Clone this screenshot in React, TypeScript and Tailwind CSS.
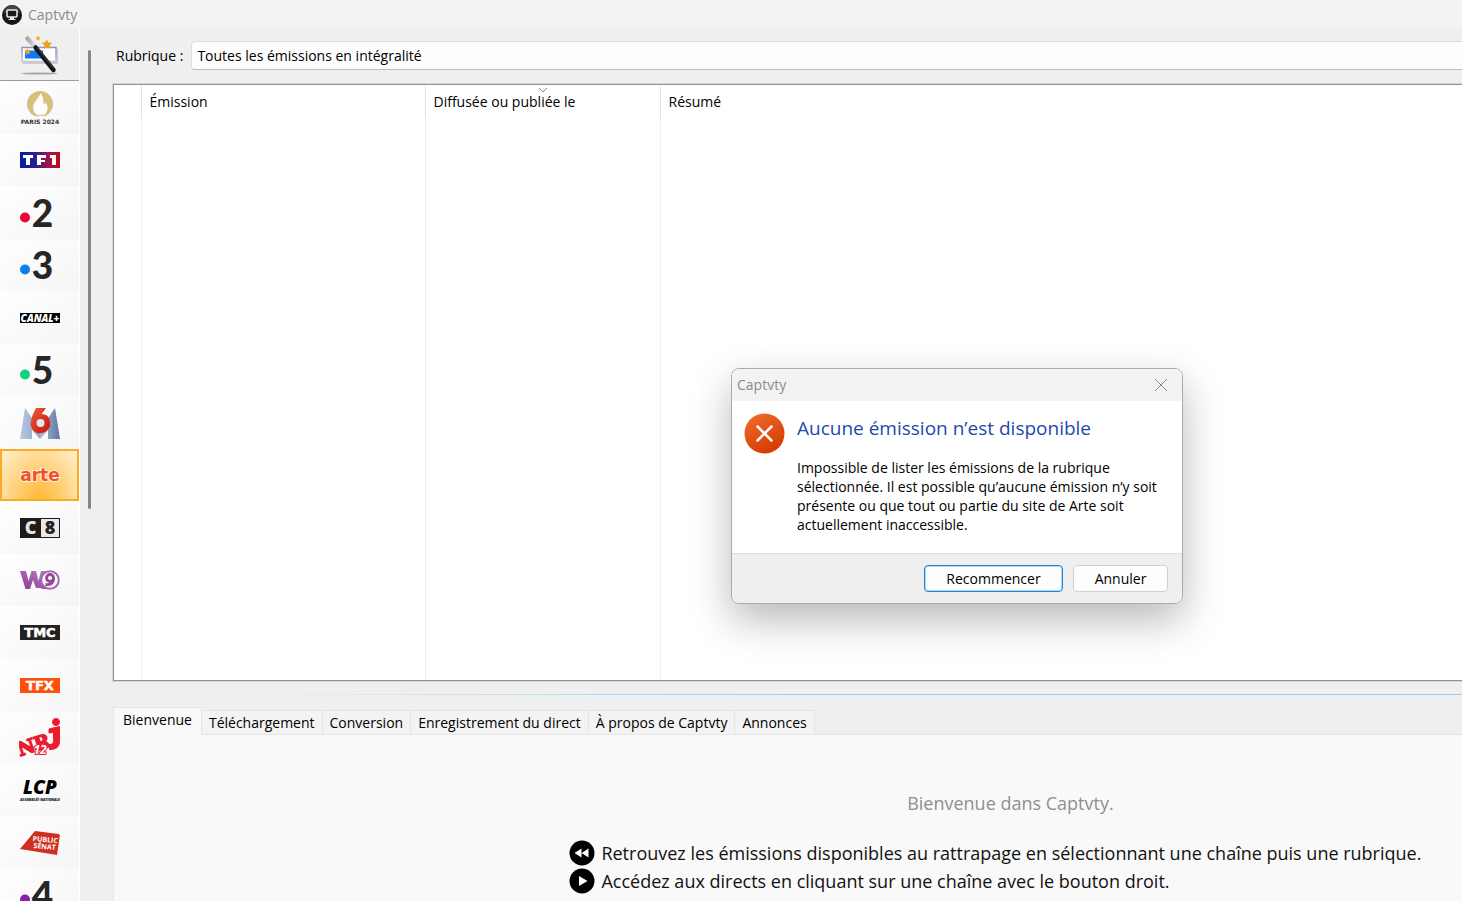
import React, { useState } from 'react';

const digitFont = 'Lato, sans-serif';
const blockFont = '"Open Sans", sans-serif';
const wideFont = '"DejaVu Sans", sans-serif';
const slabFont = '"DejaVu Serif", serif';

function WizardIcon() {
  return (
    <svg width="40" height="40" viewBox="0 0 40 40" aria-hidden="true">
      <defs>
        <linearGradient id="frame" x1="0" y1="0" x2="0" y2="1">
          <stop offset="0" stopColor="#8f93b8" />
          <stop offset="1" stopColor="#c2c4d2" />
        </linearGradient>
        <linearGradient id="tip" x1="0" y1="0" x2="1" y2="0">
          <stop offset="0" stopColor="#a8a8a8" />
          <stop offset="1" stopColor="#e6e6e6" />
        </linearGradient>
      </defs>
      <ellipse cx="19.500" cy="38.500" rx="18" ry="1" fill="#a4a4a4" />
      <rect x="3" y="14" width="35" height="15" fill="#cdcdd0" />
      <rect x="2" y="12.500" width="34" height="14" fill="#fff" stroke="url(#frame)" strokeWidth="1.500" />
      <rect x="5" y="15.500" width="18" height="8" fill="#0a7cf5" />
      <path d="M7 13.500l1.200 1.500 2.300-.2-1 2 .8 2.200-2.300-.4L6 20l-.2-2.300L4.500 16l2-.6z" fill="#eda02c" />
      <path d="M26.500 4.500l2 3 3.500.2-2.200 2.500.5 3.300-3.200-1.200-3 1.500.2-3.500-2.500-2.500 3.500-.6z" fill="#f0a01e" />
      <path d="M18 1l.8 1.300 1.700.2-1.200 1.300.3 1.700-1.600-.7-1.600.7.3-1.700-1.200-1.300 1.700-.2z" fill="#f5a51e" />
      <path d="M7.500 3.500l8 8.500" stroke="url(#tip)" strokeWidth="4.500" strokeLinecap="round" />
      <path d="M15.500 12.500L33.500 35" stroke="#161616" strokeWidth="4.500" strokeLinecap="round" />
      <path d="M17.500 13l16 20" stroke="#4a4a4a" strokeWidth="1" />
    </svg>
  );
}

function ParisLogo() {
  return (
    <svg width="42" height="44" viewBox="0 0 42 44" aria-hidden="true">
      <circle cx="21" cy="18" r="13" fill="#d5c07c" />
      <path
        d="M21.500 7c-1 5-7 8.500-7.500 14 0 3 1.500 6 4 8.500L20 32h3l1.500-2.500c3-2 4.500-5 4-8.500-.2-2-1-3.500-2-4.500-.8 1-1.400 1.600-2.200 1.700C25 13.500 23.500 10 21.500 7z"
        fill="#fdfdfd"
      />
      <path d="M17.500 28.500c1.500 1.500 5.500 1.500 7 0" stroke="#d5c07c" strokeWidth="1" fill="none" />
      <text x="21" y="38" textAnchor="middle" fontFamily={wideFont} fontWeight="700" fontSize="6" fill="#333">
        PARIS 2024
      </text>
    </svg>
  );
}

function Tf1Logo() {
  return (
    <svg width="40" height="16" viewBox="0 0 40 16" aria-hidden="true">
      <defs>
        <linearGradient id="tf1">
          <stop offset="0" stopColor="#0a1aa4" />
          <stop offset="0.35" stopColor="#20209a" />
          <stop offset="0.7" stopColor="#a0104a" />
          <stop offset="1" stopColor="#c00d14" />
        </linearGradient>
      </defs>
      <rect width="40" height="16" fill="url(#tf1)" />
      <g fill="#fff">
        <path d="M3 3h10v3H10v7H6V6H3z" />
        <path d="M17 3h9v3h-5v2h4v2h-4v3h-4z" />
        <path d="M30 3h6v10h-4V6h-2z" />
      </g>
    </svg>
  );
}

function DigitLogo({ digit, color }: { digit: string; color: string }) {
  return (
    <svg width="40" height="50" viewBox="0 0 40 50" aria-hidden="true">
      <circle cx="5" cy="29.500" r="5" fill={color} />
      <text x="22.500" y="39" textAnchor="middle" fontFamily={digitFont} fontWeight="900" fontSize="37" fill="#262626">
        {digit}
      </text>
    </svg>
  );
}

function CanalLogo() {
  return (
    <svg width="40" height="18" viewBox="0 0 40 18" aria-hidden="true">
      <rect y="4" width="40" height="10" fill="#000" />
      <text x="20" y="13" textAnchor="middle" fontFamily={blockFont} fontWeight="800" fontStyle="italic" fontSize="10" fill="#fff">
        CANAL+
      </text>
    </svg>
  );
}

function M6Logo() {
  return (
    <svg width="40" height="40" viewBox="0 0 40 40" aria-hidden="true">
      <defs>
        <linearGradient id="m6a">
          <stop offset="0" stopColor="#b9c8e2" />
          <stop offset="1" stopColor="#90a5c8" />
        </linearGradient>
        <linearGradient id="m6b">
          <stop offset="0" stopColor="#a9bad6" />
          <stop offset="1" stopColor="#62779d" />
        </linearGradient>
        <linearGradient id="m6c" x1="0" y1="0" x2="1" y2="1">
          <stop offset="0" stopColor="#ef5a3a" />
          <stop offset="1" stopColor="#c3140c" />
        </linearGradient>
      </defs>
      <path d="M5 5l15 22v9L12 27v9H0z" fill="url(#m6a)" />
      <path d="M35 5L20 27v9l8-9v9h12z" fill="url(#m6b)" />
      <path d="M16 5h10l-4.500 6c5.500 0 8.500 3.500 8.500 8.500A9.700 9.700 0 1 1 11 18c.5-5 3-9 5-13z" fill="url(#m6c)" />
      <circle cx="20.500" cy="20" r="4" fill="#dfe6f2" />
    </svg>
  );
}

function ArteLogo() {
  return (
    <svg width="42" height="24" viewBox="0 0 42 24" aria-hidden="true">
      <text
        x="21"
        y="18"
        textAnchor="middle"
        fontFamily={wideFont}
        fontWeight="700"
        fontSize="17"
        fill="#f1502d"
        stroke="#fff"
        strokeOpacity="0.7"
        strokeWidth="2"
        paintOrder="stroke"
      >
        arte
      </text>
    </svg>
  );
}

function C8Logo() {
  return (
    <svg width="40" height="26" viewBox="0 0 40 26" aria-hidden="true">
      <rect y="3" width="40" height="20" fill="#1c1c1c" />
      <rect x="21" y="4" width="18" height="18" fill="#e9e9e9" />
      <text x="10.500" y="19" textAnchor="middle" fontFamily={blockFont} fontWeight="800" fontSize="18" fill="#e6e6e6">
        C
      </text>
      <text x="30" y="19" textAnchor="middle" fontFamily={blockFont} fontWeight="800" fontSize="18" fill="#222">
        8
      </text>
    </svg>
  );
}

function W9Logo() {
  return (
    <svg width="40" height="20" viewBox="0 0 40 20" aria-hidden="true">
      <defs>
        <linearGradient id="w9" x1="0" y1="1" x2="1" y2="0">
          <stop offset="0" stopColor="#8b3d90" />
          <stop offset="1" stopColor="#b583c4" />
        </linearGradient>
      </defs>
      <path d="M0 1h6l2.500 10 3-10h4.500l2.500 10 2.500-10h9v18h-8l-1-1h-5l-3-8-3 9H5.500z" fill="url(#w9)" />
      <circle cx="30" cy="10" r="8.800" fill="#fbfbfb" stroke="#a468b0" strokeWidth="2" />
      <circle cx="30" cy="8" r="3.500" fill="none" stroke="#96489a" strokeWidth="2.800" />
      <path d="M33.500 8c.5 5-3 7-8 6.500" fill="none" stroke="#96489a" strokeWidth="2.800" />
    </svg>
  );
}

function BlockLogo({ name, color }: { name: string; color: string }) {
  return (
    <svg width="40" height="23" viewBox="0 0 40 23" aria-hidden="true">
      <rect y="4" width="40" height="15" fill={color} />
      <text x="20" y="16" textAnchor="middle" fontFamily={wideFont} fontWeight="700" fontSize="13" fill="#fff" stroke="#fff" strokeWidth="0.500">
        {name}
      </text>
    </svg>
  );
}

function NrjLogo() {
  return (
    <svg width="42" height="44" viewBox="0 0 42 44" aria-hidden="true">
      <g fill="#ec1c2e" stroke="#ec1c2e">
        <circle cx="37" cy="6" r="3.500" />
        <path d="M30 13l10.500-2.500v15c0 6-4 8-10 8v-5c3 0 4-1 4-4v-8L30 17z" />
        <g transform="rotate(-18 2 40)" fontFamily={slabFont} fontWeight="700" strokeWidth="1.500">
          <text x="1" y="40" fontSize="19">NR</text>
        </g>
      </g>
      <text
        x="21"
        y="38"
        textAnchor="middle"
        fontFamily={blockFont}
        fontWeight="700"
        fontStyle="italic"
        fontSize="12"
        fill="#fff"
        stroke="#ec1c2e"
        strokeWidth="2"
        paintOrder="stroke"
      >
        12
      </text>
    </svg>
  );
}

function LcpLogo() {
  return (
    <svg width="44" height="32" viewBox="0 0 44 32" aria-hidden="true">
      <text x="22" y="20" textAnchor="middle" fontFamily={blockFont} fontWeight="800" fontStyle="italic" fontSize="19" fill="#000">
        LCP
      </text>
      <text x="22" y="27" textAnchor="middle" fontFamily={blockFont} fontWeight="800" fontStyle="italic" fontSize="3.500" fill="#111">
        ASSEMBLÉE NATIONALE
      </text>
    </svg>
  );
}

function PublicSenatLogo() {
  return (
    <svg width="40" height="24" viewBox="0 0 40 24" aria-hidden="true">
      <path d="M15 0l23.500 3q1.500.3 1.300 1.800L37 24 0 18z" fill="#cf2f22" />
      <g transform="rotate(5 25 12)" fontFamily={blockFont} fontWeight="700" fontSize="7" fill="#fff" textAnchor="middle">
        <text x="25" y="11">PUBLIC</text>
        <text x="25" y="18">SÉNAT</text>
      </g>
    </svg>
  );
}

const channels = [
  { name: 'Paris 2024', logo: <ParisLogo /> },
  { name: 'TF1', logo: <Tf1Logo /> },
  { name: 'France 2', logo: <DigitLogo digit="2" color="#ee0033" /> },
  { name: 'France 3', logo: <DigitLogo digit="3" color="#0a82ea" /> },
  { name: 'Canal+', logo: <CanalLogo /> },
  { name: 'France 5', logo: <DigitLogo digit="5" color="#0fd27c" /> },
  { name: 'M6', logo: <M6Logo /> },
  { name: 'Arte', logo: <ArteLogo /> },
  { name: 'C8', logo: <C8Logo /> },
  { name: 'W9', logo: <W9Logo /> },
  { name: 'TMC', logo: <BlockLogo name="TMC" color="#222222" /> },
  { name: 'TFX', logo: <BlockLogo name="TFX" color="#ff4f0a" /> },
  { name: 'NRJ 12', logo: <NrjLogo /> },
  { name: 'LCP', logo: <LcpLogo /> },
  { name: 'Public Sénat', logo: <PublicSenatLogo /> },
  { name: 'France 4', logo: <DigitLogo digit="4" color="#8a1fa8" /> },
];

const tabs = ['Bienvenue', 'Téléchargement', 'Conversion', 'Enregistrement du direct', 'À propos de Captvty', 'Annonces'];

function TitleBar() {
  return (
    <header className="flex h-[29px] shrink-0 items-center gap-1.5 bg-[#f3f3f3] px-0.5 text-sm text-[#8b8b8b]">
      <svg width="20" height="20" viewBox="0 0 20 20" aria-hidden="true">
        <circle cx="10" cy="10" r="10" fill="#161616" />
        <path d="M2 8a8 8 0 0 1 16 0z" fill="#444" />
        <rect x="5" y="5" width="10" height="7" rx="1" fill="#1c1c1c" stroke="#eee" strokeWidth="1.500" />
        <path d="M8 12h4v2h1.500v1h-7v-1H8z" fill="#eee" />
      </svg>
      Captvty
    </header>
  );
}

function Sidebar({ selected, onSelect }: { selected: string; onSelect: (name: string) => void }) {
  return (
    <nav className="flex w-20 shrink-0 flex-col overflow-hidden border-r border-white">
      <button aria-label="Assistant" className="flex h-[52px] shrink-0 items-center justify-center border-b border-[#9c9c9c] bg-[#efefef]">
        <WizardIcon />
      </button>
      <div>
        {channels.map((channel) => (
          <button
            key={channel.name}
            aria-label={channel.name}
            onClick={() => onSelect(channel.name)}
            className={`flex w-full items-center justify-center pl-px odd:h-[53px] even:h-[52px] ${
              channel.name === selected
                ? 'border-2 border-[#fbab22] bg-[radial-gradient(ellipse_at_50%_110%,#ffb52e,#ffd584_55%,#fff0d2)]'
                : 'bg-linear-to-br from-white to-[#f5f5f5]'
            }`}
          >
            {channel.logo}
          </button>
        ))}
      </div>
    </nav>
  );
}

function ProgramTable() {
  return (
    <div className="min-h-0 flex-1 border border-r-0 border-[#8f919b] bg-white shadow-[0_0_0_1px_#d6d6da]">
      <table className="h-full w-full table-fixed border-collapse text-left">
        <thead>
          <tr className="h-8">
            <th className="w-[27px] border-r border-[#e3e3e3]"></th>
            <th className="w-[284px] border-r border-[#e3e3e3] px-2 font-normal">Émission</th>
            <th className="relative w-[235px] border-r border-[#e3e3e3] px-2 font-normal">
              <svg className="absolute top-0.5 left-1/2 -translate-x-1/2" width="10" height="6" viewBox="0 0 10 6" aria-hidden="true">
                <path d="M1 1l4 4 4-4" fill="none" stroke="#8a8a8a" />
              </svg>
              Diffusée ou publiée le
            </th>
            <th className="px-2 font-normal">Résumé</th>
          </tr>
        </thead>
        <tbody>
          <tr>
            <td className="border-r border-[#e6f2fb]"></td>
            <td className="border-r border-[#e6f2fb]"></td>
            <td className="border-r border-[#e6f2fb]"></td>
            <td></td>
          </tr>
        </tbody>
      </table>
    </div>
  );
}

function BottomPanel() {
  const [tab, setTab] = useState(tabs[0]);

  return (
    <section className="flex h-[194px] shrink-0 flex-col">
      <div role="tablist" className="flex h-7 items-end">
        {tabs.map((name) => (
          <button
            key={name}
            role="tab"
            aria-selected={name === tab}
            onClick={() => setTab(name)}
            className={
              name === tab
                ? 'h-7 border border-b-0 border-[#e5e5e5] bg-[#f9f9f9] px-[9px] pb-1'
                : 'h-[25px] border border-l-0 border-[#e5e5e5] bg-[#f3f3f3] px-[7px] pb-px'
            }
          >
            {name}
          </button>
        ))}
        <div className="flex-1 border-b border-[#e5e5e5]"></div>
      </div>
      <div className="flex-1 overflow-hidden border-l border-[#e5e5e5] bg-[#f9f9f9]">
        <div className="flex w-[133%] flex-col items-center pt-[54px] text-lg leading-7">
          <p className="text-[#8f8f8f]">Bienvenue dans Captvty.</p>
          <ul className="mt-[22px] pr-[30px] text-[#111]">
            <li className="flex items-center gap-1.5">
              <svg width="26" height="26" viewBox="0 0 26 26" aria-hidden="true">
                <circle cx="13" cy="13" r="12.500" />
                <path d="M12.500 8.500v9L5.500 13zM19.500 8.500v9l-7-4.500z" fill="#fff" />
              </svg>
              Retrouvez les émissions disponibles au rattrapage en sélectionnant une chaîne puis une rubrique.
            </li>
            <li className="flex items-center gap-1.5">
              <svg width="26" height="26" viewBox="0 0 26 26" aria-hidden="true">
                <circle cx="13" cy="13" r="12.500" />
                <path d="M10 8v10l8.500-5z" fill="#fff" />
              </svg>
              Accédez aux directs en cliquant sur une chaîne avec le bouton droit.
            </li>
          </ul>
        </div>
      </div>
    </section>
  );
}

function ErrorDialog({ onClose }: { onClose: () => void }) {
  return (
    <div
      role="alertdialog"
      aria-labelledby="dialog-title"
      className="absolute top-[368px] left-1/2 w-[452px] overflow-hidden rounded-lg border border-[#ababab] bg-white shadow-[0_16px_40px_rgba(0,0,0,0.28)]"
    >
      <div className="flex h-8 items-center justify-between bg-[#f3f3f3] pr-3.5 pl-[5px] text-sm text-[#8b8b8b]">
        Captvty
        <button aria-label="Fermer" onClick={onClose}>
          <svg width="14" height="14" viewBox="0 0 14 14" aria-hidden="true">
            <path d="M1 1l12 12M13 1L1 13" stroke="#8a8a8a" fill="none" />
          </svg>
        </button>
      </div>
      <div className="flex gap-3 px-3 pt-3 pb-[19px]">
        <svg className="shrink-0" width="41" height="41" viewBox="0 0 41 41" aria-hidden="true">
          <defs>
            <linearGradient id="error" x1="0.2" y1="0" x2="0.7" y2="1">
              <stop offset="0" stopColor="#ee6a2c" />
              <stop offset="1" stopColor="#d43900" />
            </linearGradient>
          </defs>
          <circle cx="20.500" cy="20.500" r="20" fill="url(#error)" />
          <path d="M13.500 13.500l14 14M27.500 13.500l-14 14" stroke="#fff" strokeWidth="2.500" strokeLinecap="round" />
        </svg>
        <div>
          <h1 id="dialog-title" className="pt-px text-[19px] leading-7 text-[#1f48ae]">
            Aucune émission n’est disponible
          </h1>
          <p className="mt-4 leading-[19px]">
            Impossible de lister les émissions de la rubrique
            <br />
            sélectionnée. Il est possible qu’aucune émission n’y soit
            <br />
            présente ou que tout ou partie du site de Arte soit
            <br />
            actuellement inaccessible.
          </p>
        </div>
      </div>
      <div className="flex h-[50px] items-center justify-end gap-2.5 border-t border-[#dfdfdf] bg-[#efefef] px-3.5">
        <button onClick={onClose} className="h-[27px] w-[139px] rounded border border-[#1c84d6] bg-[#fdfdfd] shadow-[inset_0_0_0_1px_#b5d8f2]">
          Recommencer
        </button>
        <button onClick={onClose} className="h-[27px] w-[95px] rounded border border-[#d0d0d0] bg-[#fdfdfd]">
          Annuler
        </button>
      </div>
    </div>
  );
}

export default function App() {
  const [channel, setChannel] = useState('Arte');
  const [open, setOpen] = useState(true);

  return (
    <div className="relative flex h-screen flex-col overflow-hidden bg-[#efefef] font-['Open_Sans',sans-serif] text-[14px] text-black">
      <TitleBar />
      <div className="flex min-h-0 flex-1">
        <Sidebar selected={channel} onSelect={setChannel} />
        <div className="w-8 shrink-0 px-2 pt-[21px]">
          <div className="h-[459px] w-[3px] rounded-full bg-[#868686]"></div>
        </div>
        <main className="flex min-w-0 flex-1 flex-col pl-px">
          <div className="flex items-center gap-2 pt-3 pb-3.5 pl-[3px]">
            <label htmlFor="rubrique">Rubrique :</label>
            <select
              id="rubrique"
              className="h-[29px] flex-1 appearance-none rounded-l-sm border border-r-0 border-[#dcdcdc] border-b-[#bdbdbd] bg-[#fdfdfd] px-[5px]"
            >
              <option>Toutes les émissions en intégralité</option>
            </select>
          </div>
          <ProgramTable />
          <div className="h-[26px] shrink-0 pt-[13px]">
            <div className="h-px bg-linear-to-r from-transparent from-10% via-[#8fd0f8] via-50% to-[#8fd0f8]"></div>
          </div>
          <BottomPanel />
        </main>
      </div>
      {open && <ErrorDialog onClose={() => setOpen(false)} />}
    </div>
  );
}
